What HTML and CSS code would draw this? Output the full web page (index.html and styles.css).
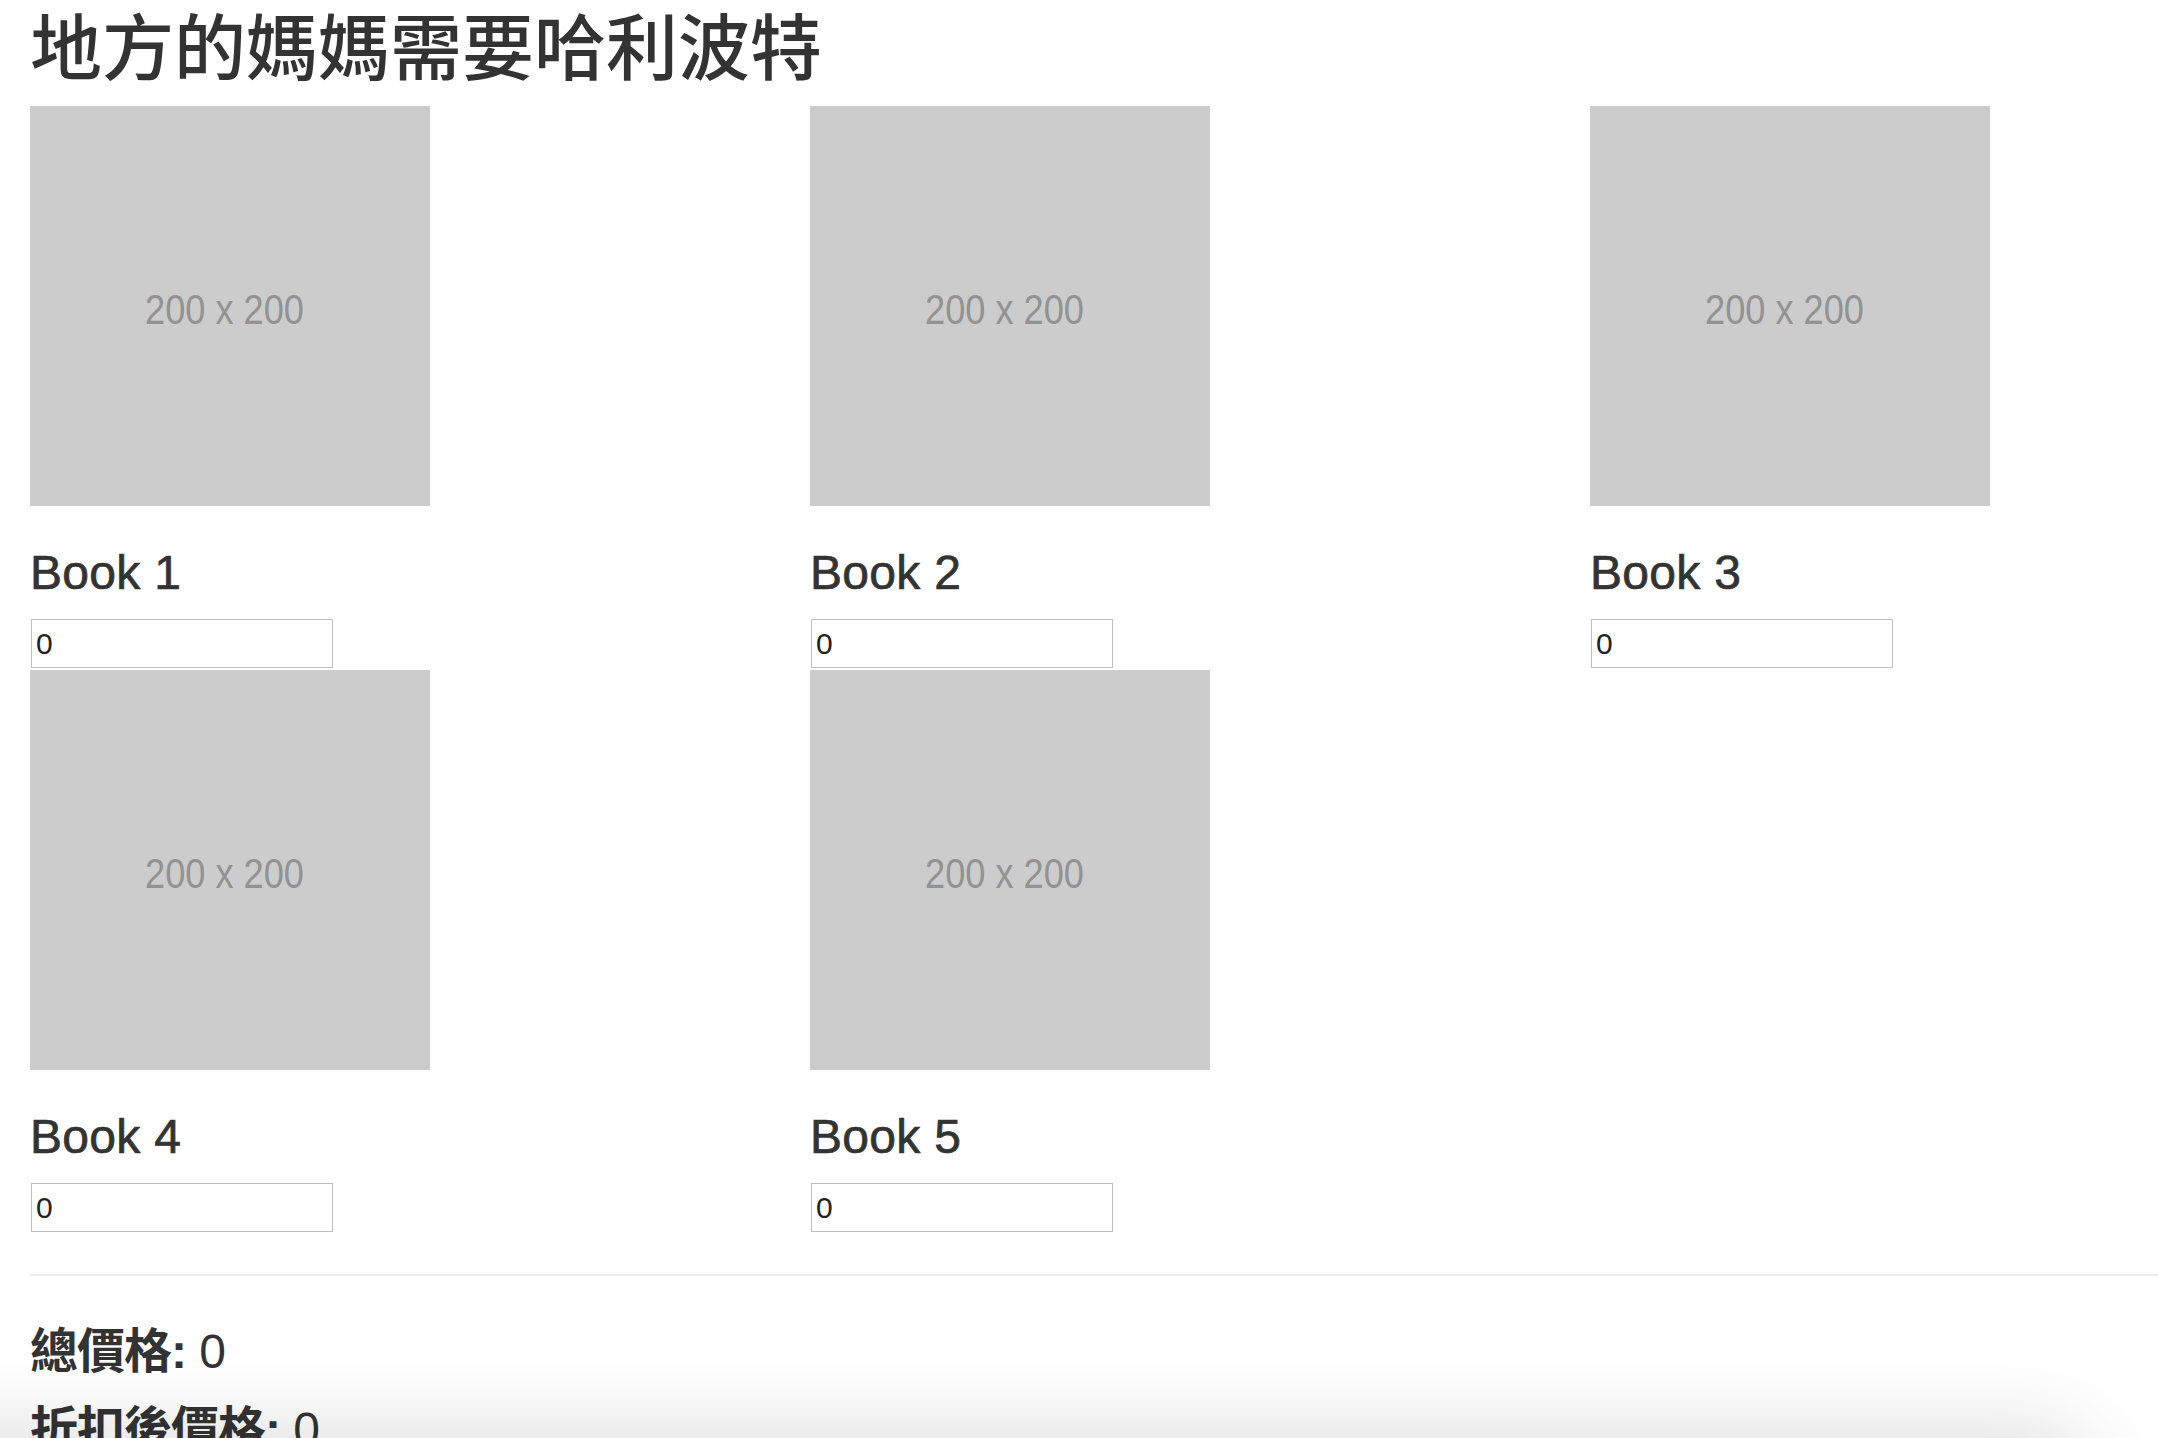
FILE: index.html
```html
<!DOCTYPE html>
<html lang="zh-Hant">
<head>
<meta charset="utf-8">
<title>地方的媽媽需要哈利波特</title>
<link rel="stylesheet" href="styles.css">
</head>
<body>
<div class="container">
  <h1 class="title">地方的媽媽需要哈利波特</h1>
  <div class="books">
    <div class="book">
      <svg class="holder" width="400" height="400" viewBox="0 0 400 400"><rect width="400" height="400" fill="#cccccc"/><text x="115" y="218" textLength="159" lengthAdjust="spacingAndGlyphs">200 x 200</text></svg>
      <h3 class="book-name">Book 1</h3>
      <input class="qty" type="text" value="0">
    </div>
    <div class="book">
      <svg class="holder" width="400" height="400" viewBox="0 0 400 400"><rect width="400" height="400" fill="#cccccc"/><text x="115" y="218" textLength="159" lengthAdjust="spacingAndGlyphs">200 x 200</text></svg>
      <h3 class="book-name">Book 2</h3>
      <input class="qty" type="text" value="0">
    </div>
    <div class="book">
      <svg class="holder" width="400" height="400" viewBox="0 0 400 400"><rect width="400" height="400" fill="#cccccc"/><text x="115" y="218" textLength="159" lengthAdjust="spacingAndGlyphs">200 x 200</text></svg>
      <h3 class="book-name">Book 3</h3>
      <input class="qty" type="text" value="0">
    </div>
    <div class="book">
      <svg class="holder" width="400" height="400" viewBox="0 0 400 400"><rect width="400" height="400" fill="#cccccc"/><text x="115" y="218" textLength="159" lengthAdjust="spacingAndGlyphs">200 x 200</text></svg>
      <h3 class="book-name">Book 4</h3>
      <input class="qty" type="text" value="0">
    </div>
    <div class="book">
      <svg class="holder" width="400" height="400" viewBox="0 0 400 400"><rect width="400" height="400" fill="#cccccc"/><text x="115" y="218" textLength="159" lengthAdjust="spacingAndGlyphs">200 x 200</text></svg>
      <h3 class="book-name">Book 5</h3>
      <input class="qty" type="text" value="0">
    </div>
  </div>
  <hr class="divider">
  <h3 class="total"><strong>總價格:</strong> 0</h3>
  <h3 class="total"><strong>折扣後價格:</strong> 0</h3>
</div>
<div class="shade"></div>
</body>
</html>
```

FILE: styles.css
```css
html {
  overflow: hidden;
}
body {
  margin: 0;
  background: #ffffff;
  color: #333333;
  font-family: "Liberation Sans", Arial, "Noto Sans CJK TC", sans-serif;
  font-size: 28px;
}
.container {
  width: 2340px;
}
.title {
  margin: 0 0 20px 30px;
  font-family: "Noto Sans CJK TC", "Noto Sans CJK SC", sans-serif;
  font-size: 72px;
  font-weight: 500;
  line-height: 86px;
  color: #333333;
}
.books {
  display: grid;
  grid-template-columns: repeat(3, 780px);
}
.book {
  padding: 0 30px 2px 30px;
}
.holder {
  display: block;
}
.holder text {
  font-family: "Liberation Sans", Arial, sans-serif;
  font-size: 43px;
  fill: #929292;
}
.book-name {
  margin: 40px 0 20px 0;
  font-size: 48px;
  font-weight: 400;
  line-height: 53px;
  letter-spacing: 0.3px;
  color: #333333;
  -webkit-text-stroke: 0.7px #333333;
}
.qty {
  display: block;
  box-sizing: border-box;
  width: 302px;
  height: 49px;
  margin: 0 0 0 1px;
  padding: 0 4px;
  border: 1px solid #bfbfbf;
  border-radius: 0;
  background: #ffffff;
  font-family: "Liberation Sans", Arial, sans-serif;
  font-size: 30px;
  line-height: 47px;
  color: #222222;
  outline: none;
}
.divider {
  margin: 40px 0 0 30px;
  height: 0;
  border: 0;
  border-top: 2px solid #eeeeee;
}
.total {
  margin: 0 0 25px 30px;
  font-family: "Liberation Sans", Arial, "Noto Sans CJK TC", sans-serif;
  font-size: 48px;
  font-weight: 400;
  line-height: 53px;
  color: #333333;
}
.divider + .total {
  margin-top: 49px;
}
.total strong {
  font-weight: 700;
  letter-spacing: -1px;
}
.shade {
  position: fixed;
  left: -300px;
  top: 100%;
  width: 2380px;
  height: 200px;
  box-shadow: 0 0 90px 0 rgba(0, 0, 0, 0.16);
  pointer-events: none;
}
```
